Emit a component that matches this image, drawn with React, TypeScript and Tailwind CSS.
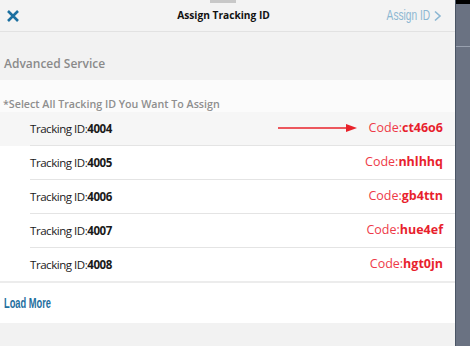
import React from "react";

const rows = [
  { id: "4004", code: "ct46o6", active: true },
  { id: "4005", code: "nhlhhq" },
  { id: "4006", code: "gb4ttn" },
  { id: "4007", code: "hue4ef" },
  { id: "4008", code: "hgt0jn" },
];

const narrow = { fontFamily: '"Liberation Sans", Arial, sans-serif' };

export default function App() {
  return (
    <div className="grid grid-cols-[455px_15px] w-[470px] h-[346px] overflow-hidden" style={{ fontFamily: '"Open Sans", sans-serif' }}>
      <div className="relative flex flex-col h-[346px] bg-[#f2f2f2]">
        <div className="absolute left-[210px] top-0 w-[26px] h-[3px] bg-[#c8c8c8]" />
        <div className="grid grid-cols-[1fr_auto_1fr] items-center h-[32px] border-b border-[#e2e2e2] bg-[#f3f3f3] px-[5px]">
          <svg width="14" height="14" viewBox="0 0 14 14" className="ml-[1px]">
            <path d="M2 2 L12 12 M12 2 L2 12" stroke="#1b6fa0" strokeWidth="2.6" strokeLinecap="butt" />
          </svg>
          <div className="text-center text-[10.2px] font-bold text-[#111] mr-[8px]">Assign Tracking ID</div>
          <div className="flex items-center justify-end text-[#8cb7d2] mr-[8px]">
            <span className="inline-block text-[14.5px] scale-x-[0.7] origin-right" style={narrow}>Assign ID</span>
            <svg width="9" height="12" viewBox="0 0 9 12" className="ml-[3px]">
              <path d="M2 1.5 L7 6 L2 10.5" stroke="#8cb7d2" strokeWidth="1.6" fill="none" />
            </svg>
          </div>
        </div>
        <div className="h-[48px] flex items-end pb-[7px] pl-[4px] text-[12px] font-semibold text-[#8a8a8a]">
          Advanced Service
        </div>
        <div className="bg-white">
          <div className="h-[32px] bg-[#fbfbfb] pt-[16px] pl-[3px] text-[10.7px] font-semibold text-[#8e8e8e] leading-[16px]">
            *Select All Tracking ID You Want To Assign
          </div>
          {rows.map((r, i) => (
            <div key={r.id} className={r.active ? "bg-[#f6f6f6]" : "bg-white"}>
              <div className="relative flex items-center h-[33px] pl-[30px] pr-[12px]">
                <div className="text-[11.5px] tracking-[-0.45px] text-[#1a1a1a]">
                  Tracking ID:<span className="font-bold">{r.id}</span>
                </div>
                <div className="flex-1" />
                {r.active && (
                  <svg width="80" height="10" viewBox="0 0 80 10" className="absolute left-[278px] top-[11px]">
                    <path d="M0 5 L70 5" stroke="#e8222a" strokeWidth="1.6" />
                    <path d="M68 1 L79 5 L68 9 Z" fill="#e8222a" />
                  </svg>
                )}
                <div className="text-[12.5px] text-[#ee3a48]">
                  Code:<span className="font-bold text-[#e81f2e]">{r.code}</span>
                </div>
              </div>
              {i < rows.length - 1 ? (
                <div className="ml-[30px] h-px bg-[#e4e4e4]" />
              ) : (
                <div className="h-[2px] bg-[#ececec]" />
              )}
            </div>
          ))}
          <div className="h-[40px] flex items-center pl-[4px] text-[#1f6fa0]">
            <span className="inline-block text-[15px] font-bold scale-x-[0.62] origin-left" style={narrow}>Load More</span>
          </div>
        </div>
        <div className="flex-1 bg-[#f2f2f2]" />
      </div>
      <div className="h-[346px] bg-gray-500 border-l border-gray-600">
        <div className="h-[4px] bg-black" />
        <div className="h-[42px]" />
        <div className="h-px bg-gray-400" />
      </div>
    </div>
  );
}
